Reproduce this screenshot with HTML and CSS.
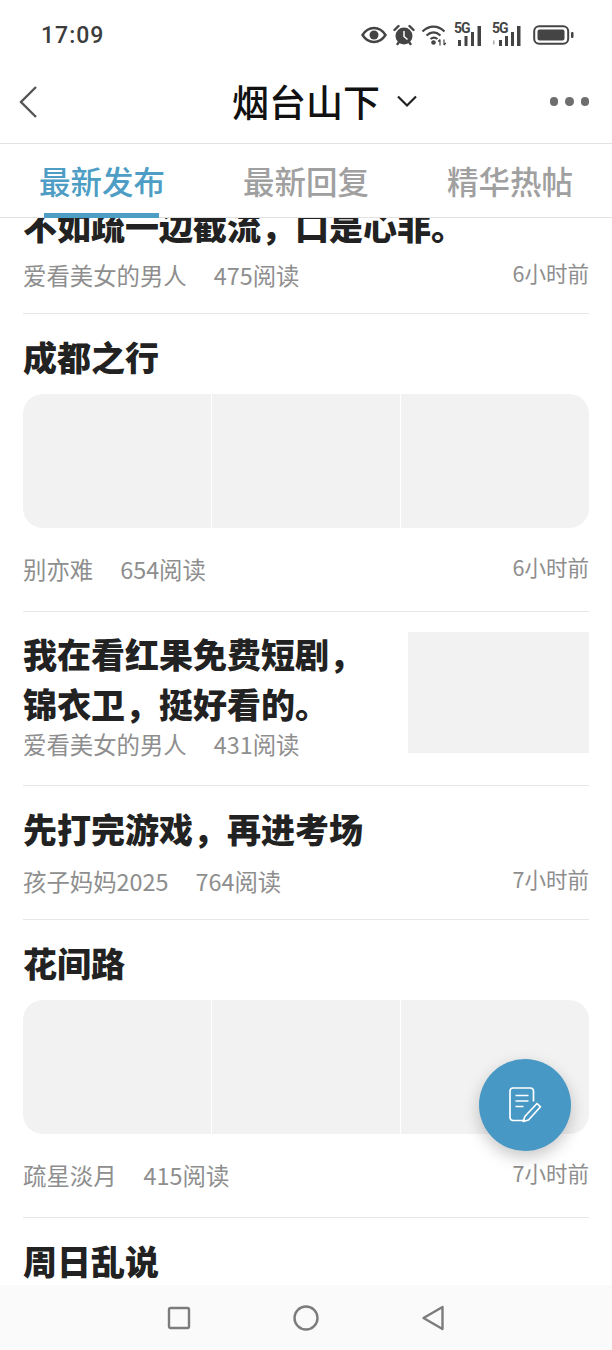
FILE: index.html
```html
<!DOCTYPE html>
<html lang="zh">
<head>
<meta charset="utf-8">
<title>烟台山下</title>
<link rel="stylesheet" href="styles.css">
</head>
<body>
<div class="app">
  <header class="status">
    <span class="clock">17:09</span>
    <div class="status-icons">
      <svg width="26" height="18" viewBox="0 0 26 18"><path d="M1.500 9C5 3.500 9 2 13 2s8 1.500 11.500 7C21 14.500 17 16 13 16S5 14.500 1.500 9Z" fill="none" stroke="#444" stroke-width="2.400"/><circle cx="13" cy="9" r="4.500" fill="#444"/></svg>
      <svg width="22" height="22" viewBox="0 0 22 22"><circle cx="11" cy="12" r="8.500" fill="#444"/><path d="M11 7v5.500l3.500 3" fill="none" stroke="#fff" stroke-width="1.500"/><path d="M1.500 6 5.500 2M20.500 6l-4-4M4.500 20l2-2.500M17.500 20l-2-2.500" stroke="#444" stroke-width="2.400" stroke-linecap="round"/></svg>
      <svg width="27" height="22" viewBox="0 0 27 22"><path d="M1.500 7.500C8 1 17 1 23.500 7.500M5.500 11.500c4.500-4 9.500-4 14 0M9.500 15c2.500-2 4.500-2 7 0" fill="none" stroke="#444" stroke-width="2.200"/><circle cx="12.500" cy="18.500" r="2.300" fill="#444"/><path d="M19 15.500v6M19 15.500l-1.800 2M23 21v-5.500M23 21l1.800-2" fill="none" stroke="#444" stroke-width="1.200"/></svg>
      <div class="signal">
        <span class="sig-label">5G</span>
        <svg width="32" height="22" viewBox="0 0 32 22"><path d="M4 15h3v6H4zM10.500 11h3v10h-3zM17 7h3v14h-3zM23.500 1h3.500v20h-3.500z" fill="#444"/></svg>
      </div>
      <div class="signal signal-last">
        <span class="sig-label">5G</span>
        <svg width="32" height="22" viewBox="0 0 32 22"><path d="M1 15.500h1.500v4H1z" fill="#aaa"/><path d="M7 15h3v6H7zM13 11h3v10h-3zM19 7h3v14h-3zM25 1h3.500v20H25z" fill="#444"/></svg>
      </div>
      <svg width="41" height="20" viewBox="0 0 41 20"><rect x="1.200" y="1.200" width="34" height="17.600" rx="5" fill="none" stroke="#444" stroke-width="2"/><rect x="4.500" y="4.500" width="27" height="11" rx="2" fill="#444"/><rect x="38" y="7" width="2.500" height="6" rx="1" fill="#444"/></svg>
    </div>
  </header>

  <nav class="nav">
    <svg class="nav-back" width="22" height="36" viewBox="0 0 22 36"><path d="M18 3 3 18l15 15" fill="none" stroke="#555" stroke-width="2.400"/></svg>
    <div class="nav-title">
      <span>烟台山下</span>
      <svg width="22" height="14" viewBox="0 0 22 14"><path d="M2 2.500 11 11.500 20 2.500" fill="none" stroke="#222" stroke-width="2.200"/></svg>
    </div>
    <div class="nav-more"><i></i><i></i><i></i></div>
  </nav>

  <div class="tabs">
    <div class="tab tab-active">最新发布</div>
    <div class="tab">最新回复</div>
    <div class="tab">精华热帖</div>
  </div>

  <main class="list">
    <article class="item item-first">
      <h2 class="title">不如疏一边截流，口是心非。</h2>
      <div class="meta"><span>爱看美女的男人</span><span>475阅读</span><span class="time">6小时前</span></div>
    </article>
    <article class="item item-gallery">
      <h2 class="title">成都之行</h2>
      <div class="gallery"><div></div><div></div><div></div></div>
      <div class="meta meta-gallery"><span>别亦难</span><span>654阅读</span><span class="time">6小时前</span></div>
    </article>
    <article class="item item-thumb">
      <div class="thumb-text">
        <h2 class="title">我在看红果免费短剧，<br>锦衣卫，挺好看的。</h2>
        <div class="meta meta-thumb"><span>爱看美女的男人</span><span>431阅读</span></div>
      </div>
      <div class="thumb"></div>
    </article>
    <article class="item">
      <h2 class="title">先打完游戏，再进考场</h2>
      <div class="meta"><span>孩子妈妈2025</span><span>764阅读</span><span class="time">7小时前</span></div>
    </article>
    <article class="item item-gallery">
      <h2 class="title">花间路</h2>
      <div class="gallery"><div></div><div></div><div></div></div>
      <div class="meta meta-gallery"><span>疏星淡月</span><span>415阅读</span><span class="time">7小时前</span></div>
    </article>
    <article class="item">
      <h2 class="title">周日乱说</h2>
    </article>
  </main>

  <footer class="sysbar">
    <svg width="24" height="24" viewBox="0 0 24 24"><rect x="2" y="2" width="20" height="20" rx="1.500" fill="none" stroke="#7c7c7c" stroke-width="2.400"/></svg>
    <svg width="26" height="26" viewBox="0 0 26 26"><circle cx="13" cy="13" r="11.500" fill="none" stroke="#7c7c7c" stroke-width="2.400"/></svg>
    <svg width="24" height="26" viewBox="0 0 24 26"><path d="M21.500 2 2.500 13l19 11Z" fill="none" stroke="#7c7c7c" stroke-width="2.400" stroke-linejoin="round"/></svg>
  </footer>

  <button class="fab" type="button" aria-label="发布">
    <svg width="36" height="38" viewBox="0 0 36 38"><path d="M17 34.500H6a3 3 0 0 1-3-3V5a3 3 0 0 1 3-3h17.500a3 3 0 0 1 3 3v10.500" fill="none" stroke="#fff" stroke-width="1.700"/><path d="M8.500 9.500h13M8.500 15h13M8.500 20.500h8" fill="none" stroke="#fff" stroke-width="1.700"/><path d="M30 17.500l3.500 3.300-12 13.200-5.200 1.500 1.500-5Z" fill="none" stroke="#fff" stroke-width="1.700" stroke-linejoin="round"/></svg>
  </button>
</div>
</body>
</html>
```

FILE: styles.css
```css
* { box-sizing: border-box; }
html, body { margin: 0; padding: 0; }
body {
  background: #fff;
  font-family: "Noto Sans CJK SC", "Noto Sans", sans-serif;
  color: #222;
}
.app {
  position: relative;
  width: 612px;
  height: 1350px;
  display: flex;
  flex-direction: column;
  overflow: hidden;
}
.status {
  height: 70px;
  flex: none;
  display: flex;
  align-items: center;
  justify-content: space-between;
  padding: 0 38px 0 41px;
}
.clock {
  font-family: "Roboto", "Liberation Sans", sans-serif;
  font-size: 23px;
  font-weight: 500;
  letter-spacing: 1px;
  color: #3c3c3c;
}
.status-icons { display: flex; align-items: center; gap: 6px; }
.signal { position: relative; width: 32px; height: 24px; display: flex; align-items: flex-end; }
.signal-last { margin-right: 3px; }
.sig-label {
  position: absolute;
  left: 0;
  top: -3px;
  font-family: "Roboto", sans-serif;
  font-size: 14px;
  font-weight: 700;
  color: #444;
  line-height: 16px;
  letter-spacing: -1px;
}
.nav {
  height: 74px;
  flex: none;
  display: flex;
  align-items: center;
  justify-content: space-between;
  padding: 0 23px 10px 18px;
  border-bottom: 1px solid #e2e2e2;
  position: relative;
}
.nav-title {
  position: absolute;
  left: 232px;
  top: 4px;
  display: flex;
  align-items: center;
  gap: 16px;
  font-size: 37px;
  font-weight: 500;
  line-height: 54px;
  color: #111;
}
.nav-more { display: flex; gap: 7px; }
.nav-more i { width: 8.500px; height: 8.500px; border-radius: 50%; background: #6e6e6e; display: block; }
.tabs {
  height: 74px;
  flex: none;
  display: flex;
  justify-content: space-between;
  padding: 0 39px;
  border-bottom: 1px solid #e2e2e2;
}
.tab {
  position: relative;
  font-size: 31.500px;
  font-weight: 500;
  line-height: 72px;
  color: #a0a0a0;
}
.tab-active { color: #4d9dc4; }
.tab-active::after {
  content: "";
  position: absolute;
  left: 5px;
  right: 6px;
  bottom: -1px;
  height: 5px;
  background: #4d9dc4;
}
.list {
  flex: 1;
  min-height: 0;
  overflow: hidden;
  padding: 0 23px;
}
.item { padding: 21px 0 22px; border-bottom: 1px solid #e6e6e6; }
.item:last-child { border-bottom: 0; }
.item-first { padding: 0 0 22px; margin-top: -17px; }
.item-first .meta { margin-top: 8px; }
.item-gallery { padding-bottom: 26px; }
.title {
  margin: -3px 0 0;
  font-size: 34px;
  line-height: 50px;
  font-weight: 900;
  color: #222;
}
.meta {
  display: flex;
  gap: 27px;
  margin-top: 11px;
  font-size: 23.400px;
  line-height: 32px;
  color: #8e8e8e;
}
.meta-gallery { margin-top: 25px; }
.meta-thumb { margin-top: -1px; }
.time { margin-left: auto; font-size: 21.500px; position: relative; top: -2px; }
.gallery {
  margin-top: 12px;
  height: 134px;
  border-radius: 20px;
  overflow: hidden;
  display: grid;
  grid-template-columns: repeat(3, 1fr);
  gap: 1.500px;
}
.gallery div { background: #f2f2f2; }
.item-thumb { display: flex; justify-content: space-between; padding-top: 20px; padding-bottom: 25px; }
.thumb { width: 181px; height: 121px; background: #f2f2f2; flex: none; }
.sysbar {
  height: 65px;
  flex: none;
  background: #fafafa;
  display: flex;
  align-items: center;
  padding: 0 167px 0 167px;
  justify-content: space-between;
}
.fab {
  position: absolute;
  left: 479px;
  top: 1059px;
  width: 92px;
  height: 92px;
  border: 0;
  padding: 0;
  border-radius: 50%;
  background: #4798c4;
  box-shadow: 0 6px 16px rgba(0, 0, 0, .22);
  display: flex;
  align-items: center;
  justify-content: center;
}
```
